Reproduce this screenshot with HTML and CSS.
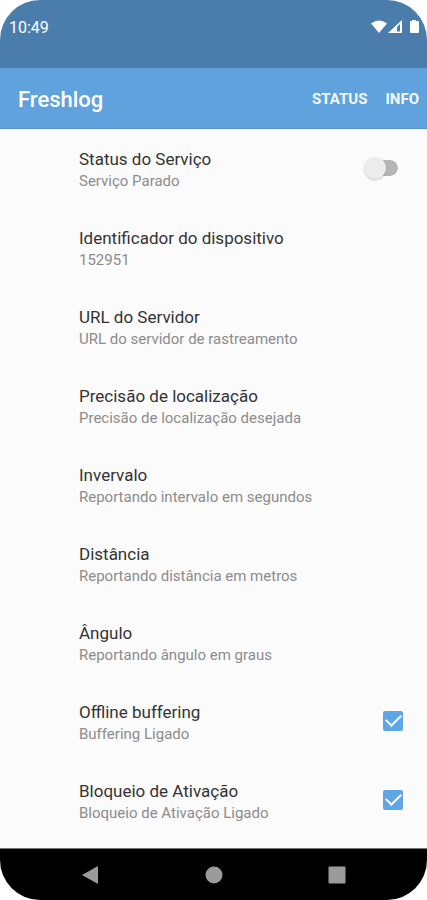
FILE: index.html
```html
<!DOCTYPE html>
<html lang="pt-BR">
<head>
  <meta charset="UTF-8" />
  <meta name="viewport" content="width=device-width, initial-scale=1.0" />
  <title>Freshlog</title>
  <link rel="stylesheet" href="styles.css">
</head>
<body>
  <div class="phone">
    <div class="status-bar">
      <span class="clock">10:49</span>
      <svg class="status-icons" viewBox="0 0 50 16" aria-hidden="true">
        <path d="M0 4.500Q8 -1.500 16 4.500L8 14Z" fill="#fff"/>
        <path d="M31 1V14H17Z" fill="#fff"/>
        <path d="M26 8L29 5V12.500H26Z" fill="#4a7dac"/>
        <path d="M41 1H45V2H47Q48 2 48 3V13Q48 14 47 14H40Q39 14 39 13V3Q39 2 40 2H41Z" fill="#fff"/>
      </svg>
    </div>

    <header class="app-bar">
      <h1>Freshlog</h1>
      <button class="action" type="button">STATUS</button>
      <button class="action" type="button">INFO</button>
    </header>

    <main class="settings">
      <label class="row">
        <span class="text">
          <span class="name">Status do Serviço</span>
          <span class="summary">Serviço Parado</span>
        </span>
        <input class="switch" type="checkbox" role="switch">
      </label>

      <button class="row" type="button">
        <span class="text">
          <span class="name">Identificador do dispositivo</span>
          <span class="summary">152951</span>
        </span>
      </button>

      <button class="row" type="button">
        <span class="text">
          <span class="name">URL do Servidor</span>
          <span class="summary">URL do servidor de rastreamento</span>
        </span>
      </button>

      <button class="row" type="button">
        <span class="text">
          <span class="name">Precisão de localização</span>
          <span class="summary">Precisão de localização desejada</span>
        </span>
      </button>

      <button class="row" type="button">
        <span class="text">
          <span class="name">Invervalo</span>
          <span class="summary">Reportando intervalo em segundos</span>
        </span>
      </button>

      <button class="row" type="button">
        <span class="text">
          <span class="name">Distância</span>
          <span class="summary">Reportando distância em metros</span>
        </span>
      </button>

      <button class="row" type="button">
        <span class="text">
          <span class="name">Ângulo</span>
          <span class="summary">Reportando ângulo em graus</span>
        </span>
      </button>

      <label class="row">
        <span class="text">
          <span class="name">Offline buffering</span>
          <span class="summary">Buffering Ligado</span>
        </span>
        <input class="check" type="checkbox" checked>
      </label>

      <label class="row">
        <span class="text">
          <span class="name">Bloqueio de Ativação</span>
          <span class="summary">Bloqueio de Ativação Ligado</span>
        </span>
        <input class="check" type="checkbox" checked>
      </label>
    </main>

    <nav class="nav-bar">
      <button type="button" aria-label="Voltar">
        <svg viewBox="0 0 20 20"><path d="M17 1V19L1 10Z" fill="#9b9b9b"/></svg>
      </button>
      <button type="button" aria-label="Início">
        <svg viewBox="0 0 20 20"><circle cx="10" cy="10" r="8.500" fill="#9b9b9b"/></svg>
      </button>
      <button type="button" aria-label="Recentes">
        <svg viewBox="0 0 20 20"><rect x="1.500" y="1.500" width="17" height="17" rx="1" fill="#9b9b9b"/></svg>
      </button>
    </nav>
  </div>
</body>
</html>
```
FILE: styles.css
```css
* { box-sizing: border-box; }

body {
  margin: 0;
  background: #ffffff;
  font-family: Roboto, "Liberation Sans", sans-serif;
}

button {
  border: none;
  padding: 0;
  background: none;
  font-family: inherit;
  cursor: pointer;
}

.phone {
  display: flex;
  flex-direction: column;
  min-height: 100vh;
  background: #fbfbfb;
  border-radius: 40px;
  overflow: hidden;
}

.status-bar {
  display: flex;
  justify-content: space-between;
  align-items: flex-start;
  height: 68px;
  padding: 18px 6px 0 9px;
  background: #4a7dac;
  color: #ffffff;
}

.clock {
  font-size: 16px;
  line-height: 20px;
}

.status-icons {
  width: 50px;
  height: 16px;
  margin-top: 1px;
}

.app-bar {
  display: flex;
  align-items: center;
  gap: 18px;
  height: 61px;
  padding: 2px 8px 0 18px;
  background: #5fa2de;
  border-bottom: 1px solid #5690c5;
  color: #ffffff;
}

.app-bar h1 {
  flex: 1;
  margin: 0;
  font-size: 22px;
  font-weight: 500;
}

.action {
  color: #f4f8fd;
  font-size: 15px;
  font-weight: 700;
}

.settings {
  flex: 1;
}

.row {
  display: flex;
  align-items: center;
  width: 100%;
  height: 79px;
  padding: 0 24px 2px 79px;
  text-align: left;
  cursor: pointer;
}

.text {
  flex: 1;
  padding-top: 4px;
}

.name,
.summary {
  display: block;
  line-height: 22px;
}

.name {
  color: #333333;
  font-size: 17px;
}

.summary {
  color: #8c8c8c;
  font-size: 15px;
}

.switch {
  appearance: none;
  position: relative;
  width: 34px;
  height: 16px;
  margin: 0 5px 0 0;
  border-left: 6px solid transparent;
  border-radius: 8px;
  background: #b5b5b5;
  background-clip: padding-box;
}

.switch::before {
  content: "";
  position: absolute;
  top: -3px;
  left: -6px;
  width: 22px;
  height: 22px;
  border-radius: 50%;
  background: #ececec;
  box-shadow: 0 1px 2px rgba(0, 0, 0, 0.2);
}

.switch:checked::before {
  left: 8px;
  background: #5fa2de;
}

.check {
  appearance: none;
  display: grid;
  place-items: center;
  width: 20px;
  height: 20px;
  margin: 0;
  border: 2px solid #5fa6e6;
  border-radius: 2px;
}

.check:checked {
  background: #5fa6e6;
}

.check:checked::before {
  content: "";
  width: 13px;
  height: 7px;
  margin-bottom: 4px;
  border: solid #ffffff;
  border-width: 0 0 2px 2px;
  transform: rotate(-45deg);
}

.nav-bar {
  display: flex;
  justify-content: center;
  align-items: center;
  gap: 103px;
  height: 52px;
  background: #000000;
  border-top: 1px solid #777777;
}

.nav-bar button,
.nav-bar svg {
  display: block;
  width: 20px;
  height: 20px;
}
```
